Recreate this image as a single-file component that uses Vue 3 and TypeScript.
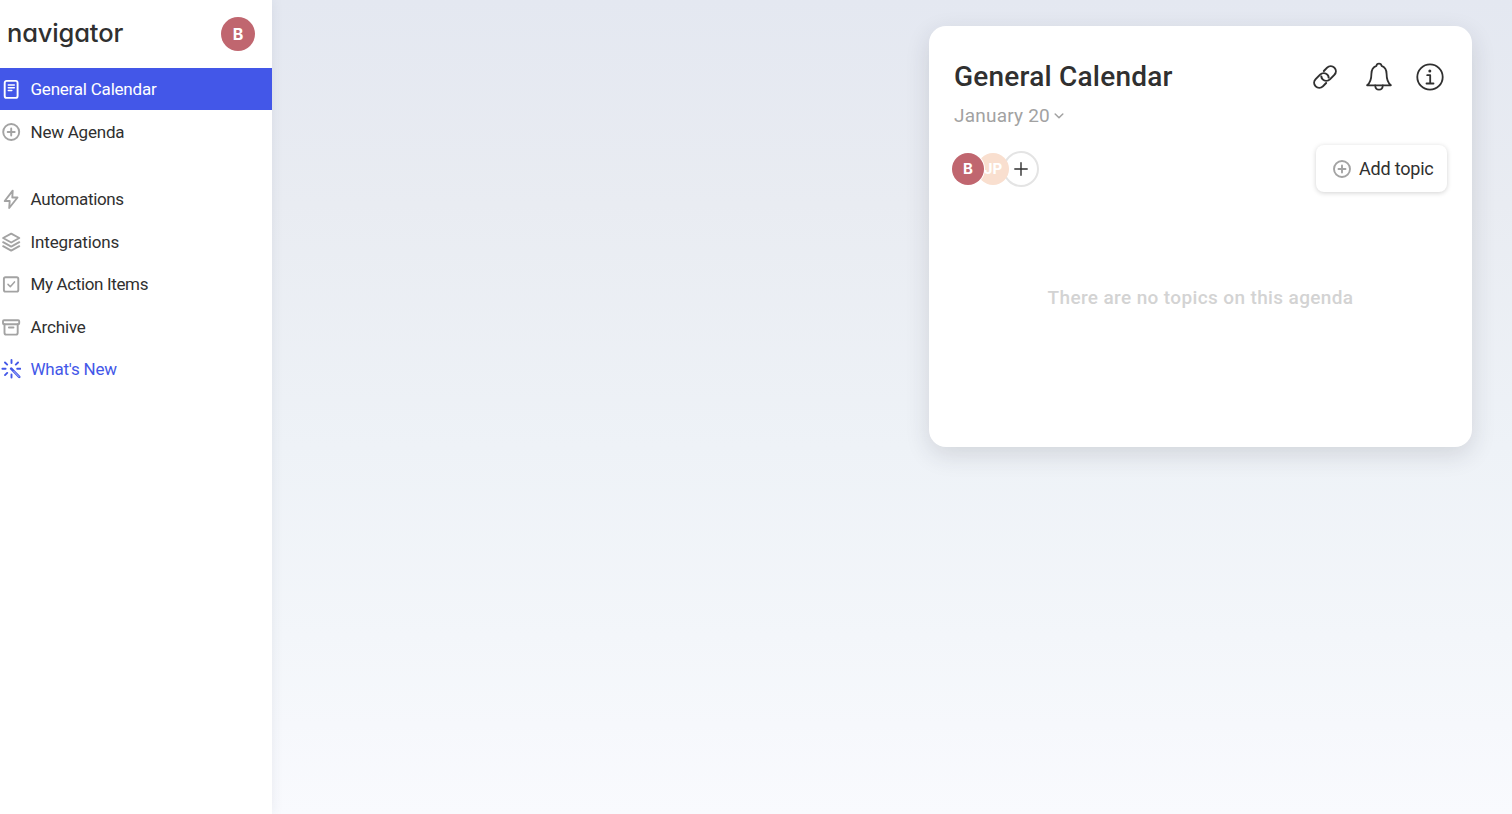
<script setup lang="ts">
import { ref } from 'vue'

interface NavItem {
  label: string
  icon: string
}

const agendas: NavItem[] = [
  { label: 'General Calendar', icon: 'doc' },
  { label: 'New Agenda', icon: 'plus' },
]
const tools: NavItem[] = [
  { label: 'Automations', icon: 'bolt' },
  { label: 'Integrations', icon: 'layers' },
  { label: 'My Action Items', icon: 'check' },
  { label: 'Archive', icon: 'archive' },
  { label: "What's New", icon: 'spark' },
]
const groups = [agendas, tools]
const selected = ref('General Calendar')
</script>

<template>
  <div class="app">
    <aside class="sidebar">
      <header class="brand">
        <span class="logo">navigator</span>
        <span class="avatar user">B</span>
      </header>
      <nav v-for="(group, i) in groups" :key="i" class="group">
        <a
          v-for="item in group"
          :key="item.label"
          :class="['item', item.icon, { active: item.label === selected }]"
          @click="selected = item.label"
        >
          <svg class="icon" viewBox="0 0 20 20">
            <template v-if="item.icon === 'doc'">
              <rect x="3.7" y="1.9" width="12.9" height="17" rx="2" />
              <path class="thin" d="M7.3 6h6M7.3 8.8h6M7.3 11.6h3.5" />
            </template>
            <template v-else-if="item.icon === 'plus'">
              <circle cx="10.2" cy="10" r="8" />
              <path d="M10.2 6.5v7M6.700 10h7" />
            </template>
            <path
              v-else-if="item.icon === 'bolt'"
              d="M11.7 1.6 3.7 12h5l-.5 7 8.3-10.5h-5.2z"
            />
            <path
              v-else-if="item.icon === 'layers'"
              d="M10.2 1.6 2.1 6l8.1 4.500L18.300 6zM2.100 10.200l8.100 4.400 8.100-4.400M2.100 14.200l8.100 4.400 8.100-4.400"
            />
            <template v-else-if="item.icon === 'check'">
              <rect x="2.9" y="3.200" width="14.400" height="14.400" rx="1.600" />
              <path class="thin" d="m7 10.400 2.300 2.300 4.200-4.800" />
            </template>
            <template v-else-if="item.icon === 'archive'">
              <rect x="2" y="3.200" width="16.200" height="4" rx="1" />
              <path d="M3.500 7.200v8.500q0 1.900 1.900 1.900h9.400q1.900 0 1.900-1.900V7.200M7.900 10.500h4.600" />
            </template>
            <template v-else>
              <path
                d="M10.500 1v3M10.500 15.500v3M1.400 9.700h3.200M16.200 9.700h3.200M4 3.500l2.200 2.100M17 3.500l-2.200 2.100M4 16.100l2.200-2.200"
              />
              <path class="wand" d="m10.200 9.700 8 8.200" />
              <path class="wand-core" d="m12.700 12.200 5.200 5.400" />
            </template>
          </svg>
          <span>{{ item.label }}</span>
        </a>
      </nav>
    </aside>

    <main class="stage">
      <section class="card">
        <div class="heading">
          <h1>General Calendar</h1>
          <div class="actions">
            <svg class="link" viewBox="0 0 28 28">
              <g transform="rotate(-45 14 14)">
                <path d="M10.500 19.100H5.900a5.100 5.100 0 0 1 0-10.200h6.300a5.100 5.100 0 0 1 5.100 5.100q0 1.700-1.100 3" />
                <path d="M17.500 8.900h4.600a5.100 5.100 0 0 1 0 10.200h-6.300a5.100 5.100 0 0 1-5.100-5.100q0-1.700 1.100-3" />
              </g>
            </svg>
            <svg class="bell" viewBox="0 0 28 30">
              <path d="M11.500 3.800c.2-3 4.800-3 5 0 3.700 1.200 5.100 4.300 5.100 8.200 0 5.600 1.200 8.800 4.300 11.300H2.100c3.100-2.500 4.300-5.700 4.300-11.300 0-3.900 1.400-7 5.100-8.200z" />
              <path d="M10.200 23.500c.3 5.600 7.300 5.600 7.600 0" />
            </svg>
            <svg class="info" viewBox="0 0 28 28">
              <circle cx="14" cy="14" r="12.700" />
              <path d="M11.200 12.200h3v7.900M10.500 20.500h7" />
              <circle class="dot" cx="13.800" cy="8" r="1.500" />
            </svg>
          </div>
        </div>

        <button class="date">
          <span>January 20</span>
          <svg viewBox="0 0 10 6"><path d="m1.200 1 3.800 3.800L8.800 1" /></svg>
        </button>

        <div class="toolbar">
          <div class="people">
            <span class="avatar first">B</span>
            <span class="avatar second">JP</span>
            <button class="invite">
              <svg viewBox="0 0 14 14"><path d="M7 .8v12.400M.8 7h12.400" /></svg>
            </button>
          </div>
          <button class="add">
            <svg class="icon" viewBox="0 0 20 20">
              <circle cx="10" cy="10" r="8" />
              <path d="M10 6.500v7M6.500 10h7" />
            </svg>
            <span>Add topic</span>
          </button>
        </div>

        <p class="empty">There are no topics on this agenda</p>
      </section>
    </main>
  </div>
</template>

<style>
body {
  margin: 0;
}
</style>

<style scoped>
.app {
  display: flex;
  height: 814px;
  overflow: hidden;
  box-sizing: border-box;
  color: #303030;
  font-family: Roboto, "Liberation Sans", sans-serif;
}
.app * {
  box-sizing: border-box;
}
button {
  padding: 0;
  border: 0;
  background: none;
  color: inherit;
  font: inherit;
}
svg {
  display: block;
  flex: none;
  fill: none;
  stroke: currentColor;
  stroke-linecap: round;
  stroke-linejoin: round;
}
.sidebar {
  position: relative;
  z-index: 1;
  flex: none;
  width: 272px;
  background: #fff;
  box-shadow: 0 0 12px rgba(40, 50, 80, 0.08);
}
.brand {
  display: flex;
  align-items: center;
  justify-content: space-between;
  height: 68px;
  padding: 0 17px 0 7px;
}
.logo {
  margin-top: -2px;
  font: 550 25.5px/32px Inter, sans-serif;
  font-feature-settings: "cv11";
  letter-spacing: -0.15px;
}
.avatar {
  display: flex;
  align-items: center;
  justify-content: center;
  border-radius: 50%;
  background: #c0666f;
  color: #fff;
  font-family: Inter, sans-serif;
  font-weight: 700;
}
.user {
  width: 34px;
  height: 34px;
  font-size: 16px;
}
.group + .group {
  margin-top: 25.5px;
}
.item {
  display: flex;
  align-items: center;
  gap: 9.5px;
  height: 42.4px;
  padding-left: 1px;
  font-size: 17px;
  letter-spacing: -0.22px;
  cursor: pointer;
}
.bolt,
.check {
  letter-spacing: -0.36px;
}
.layers,
.archive {
  letter-spacing: -0.14px;
}
.icon {
  width: 20px;
  height: 20px;
  color: #a3a3a3;
  stroke-width: 1.9;
}
.thin {
  stroke-width: 1.5;
}
.active {
  background: #4357e8;
  color: #fff;
}
.active .icon {
  color: #fff;
}
.spark,
.spark .icon {
  color: #4357e8;
}
.wand {
  stroke-width: 2.6;
}
.wand-core {
  stroke: #b9c1fa;
  stroke-width: 0.9;
}
.stage {
  display: flex;
  flex: 1;
  align-items: flex-start;
  justify-content: flex-end;
  padding: 25.5px 40px 0 0;
  background: linear-gradient(#e4e8f1 0%, #e9ecf2 25%, #eef2f7 55%, #f3f6fa 78%, #f9fafe 100%);
}
.card {
  width: 543px;
  height: 421px;
  padding: 31px 25px 0;
  border-radius: 17px;
  background: #fff;
  box-shadow: 0 8px 24px rgba(40, 45, 60, 0.14);
}
.heading {
  display: flex;
  align-items: center;
  justify-content: space-between;
  height: 40px;
}
h1 {
  margin: 0;
  font-size: 28px;
  font-weight: 500;
  line-height: 40px;
  letter-spacing: 0.22px;
}
.actions {
  display: flex;
  align-items: center;
  padding-right: 3px;
  stroke-width: 1.8;
}
.link {
  width: 28px;
  height: 28px;
  stroke-width: 2;
}
.bell {
  width: 28px;
  height: 30px;
  margin: 0 23px 0 26px;
}
.info {
  width: 28px;
  height: 28px;
}
.dot {
  fill: currentColor;
  stroke: none;
}
.date {
  display: flex;
  align-items: center;
  gap: 4px;
  height: 24px;
  margin-top: 7px;
  color: #a2a2a2;
  font-size: 19px;
  letter-spacing: 0.22px;
}
.date svg {
  width: 10px;
  height: 6px;
  margin-top: 1px;
  stroke-width: 1.5;
}
.toolbar {
  display: flex;
  align-items: center;
  justify-content: space-between;
  height: 48px;
  margin-top: 17px;
}
.people {
  display: flex;
  align-items: center;
  margin-left: -2px;
}
.first,
.second {
  width: 32px;
  height: 32px;
  font-size: 15px;
}
.first {
  z-index: 2;
  box-shadow: 0 0 0 1px #fff;
}
.second {
  z-index: 1;
  margin-left: -7px;
  background: #f9dfcf;
}
.invite {
  display: flex;
  align-items: center;
  justify-content: center;
  width: 36px;
  height: 36px;
  margin-left: -6px;
  border: 2px solid #e4e4e4;
  border-radius: 50%;
}
.invite svg {
  width: 14px;
  height: 14px;
  stroke-width: 1.4;
}
.add {
  display: flex;
  align-items: center;
  gap: 7px;
  width: 131px;
  height: 47px;
  padding-left: 16px;
  border-radius: 8px;
  box-shadow: 0 1px 5px rgba(0, 0, 0, 0.18);
  font-size: 18px;
  letter-spacing: -0.2px;
}
.empty {
  margin: 93.5px 0 0;
  color: #d3d3d3;
  font-size: 19px;
  font-weight: 500;
  line-height: 24px;
  letter-spacing: 0.37px;
  text-align: center;
}
</style>
